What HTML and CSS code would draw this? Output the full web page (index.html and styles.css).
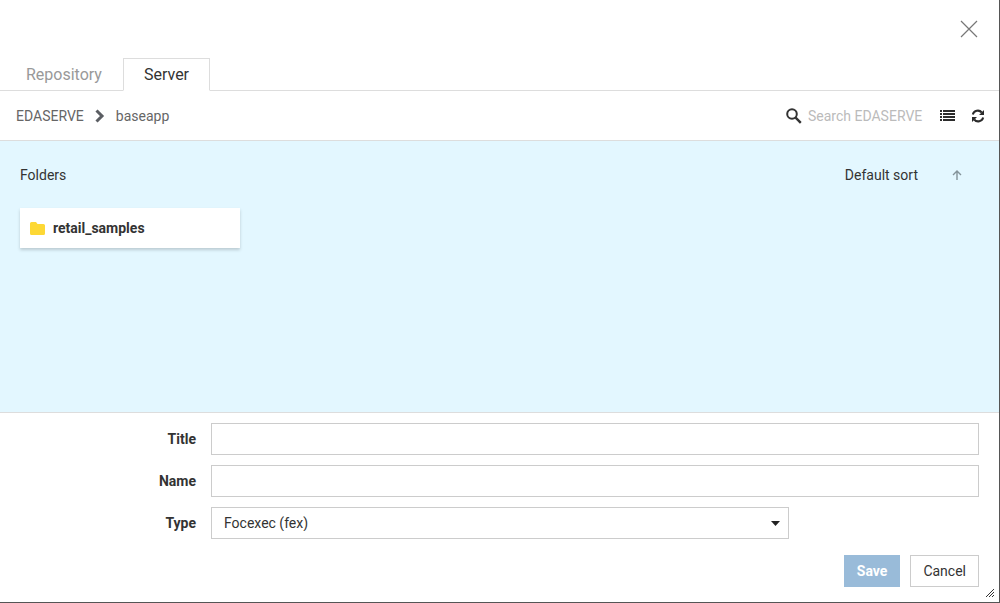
FILE: index.html
```html
<!DOCTYPE html>
<html lang="en">
<head>
    <meta charset="UTF-8">
    <meta name="viewport" content="width=device-width, initial-scale=1.0">
    <title>Save As</title>
    <link rel="stylesheet" href="styles.css">
</head>
<body>
    <div class="dialog">
        <div class="dialog-header">
            <button type="button" class="close-btn" aria-label="Close">
                <svg width="18" height="18" viewBox="0 0 18 18"><path d="M1 1l16 16M17 1L1 17" fill="none" stroke="#777" stroke-width="1.2"/></svg>
            </button>
        </div>

        <div class="tabs" role="tablist">
            <button type="button" class="tab" role="tab" aria-selected="false">Repository</button>
            <button type="button" class="tab active" role="tab" aria-selected="true">Server</button>
        </div>

        <div class="toolbar">
            <nav class="breadcrumb">
                <a href="#">EDASERVE</a>
                <svg width="10" height="14" viewBox="0 0 10 14"><path d="M1.500 1.500L7 7l-5.500 5.500" fill="none" stroke="#5b5e63" stroke-width="3"/></svg>
                <a href="#">baseapp</a>
            </nav>
            <div class="tools">
                <label class="search-icon" for="search" aria-label="Search">
                    <svg width="16" height="16" viewBox="0 0 16 16"><circle cx="6" cy="6" r="4.800" fill="none" stroke="#333" stroke-width="2"/><path d="M9.600 9.600l5.200 5.200" stroke="#333" stroke-width="2.400"/></svg>
                </label>
                <input type="text" id="search" class="search" placeholder="Search EDASERVE">
                <button type="button" class="icon-btn" aria-label="List view">
                    <svg width="15" height="12" viewBox="0 0 15 12"><path d="M0 0h2v2H0zM3 0h12v2H3zM0 3h2v2H0zM3 3h12v2H3zM0 6h2v2H0zM3 6h12v2H3zM0 9h2v2H0zM3 9h12v2H3z" fill="#2b2b2b"/></svg>
                </button>
                <button type="button" class="icon-btn" aria-label="Refresh">
                    <svg width="14" height="14" viewBox="0 0 14 14"><path d="M1.800 5.500A5.200 5.200 0 0 1 10.800 3.500M12.200 8.500A5.200 5.200 0 0 1 3.200 10.500" fill="none" stroke="#2b2b2b" stroke-width="2"/><path d="M13 1v5H8zM1 13V8h5z" fill="#2b2b2b"/></svg>
                </button>
            </div>
        </div>

        <div class="content">
            <div class="content-header">
                <span>Folders</span>
                <div class="sort">
                    <span>Default sort</span>
                    <button type="button" class="icon-btn" aria-label="Sort ascending">
                        <svg width="10" height="10" viewBox="0 0 10 10"><path d="M5 10V1M1 5l4-4 4 4" fill="none" stroke="#84939a" stroke-width="1.400"/></svg>
                    </button>
                </div>
            </div>
            <button type="button" class="folder">
                <svg width="15" height="13" viewBox="0 0 15 13"><path d="M1.500 0H6l1.500 2h6Q15 2 15 3.500v8Q15 13 13.500 13h-12Q0 13 0 11.500v-10Q0 0 1.500 0z" fill="#fdd835"/></svg>
                <span>retail_samples</span>
            </button>
        </div>

        <form class="save-form">
            <div class="row">
                <label for="title">Title</label>
                <input type="text" id="title">
            </div>
            <div class="row">
                <label for="name">Name</label>
                <input type="text" id="name">
            </div>
            <div class="row">
                <label for="type">Type</label>
                <div class="select-box">
                    <select id="type">
                        <option>Focexec (fex)</option>
                    </select>
                    <svg class="caret" width="9" height="5" viewBox="0 0 9 5"><path d="M0 0h9L4.500 5z" fill="#222"/></svg>
                </div>
            </div>
            <div class="buttons">
                <button type="button" class="btn save">Save</button>
                <button type="button" class="btn">Cancel</button>
            </div>
        </form>
        <svg class="resize" width="8" height="8" viewBox="0 0 8 8"><path d="M0 8L8 0M3 8l5-5M6 8l2-2" fill="none" stroke="#333" stroke-width="1"/></svg>
    </div>
</body>
</html>
```

FILE: styles.css
```css
* {
    box-sizing: border-box;
}
body {
    margin: 0;
    font-family: Roboto, Arial, sans-serif;
    font-size: 14px;
    color: #333;
}
button, input, select {
    font-family: inherit;
    font-size: 14px;
    color: inherit;
}
button {
    cursor: pointer;
}
svg {
    display: block;
}
.dialog {
    position: relative;
    display: flex;
    flex-direction: column;
    min-height: 100vh;
    background-color: #fff;
    border-right: 1px solid #555;
    border-bottom: 1px solid #555;
}
.dialog-header {
    display: flex;
    justify-content: flex-end;
    padding: 20px 21px;
}
.close-btn, .icon-btn {
    padding: 0;
    border: none;
    background: none;
}
.tabs {
    display: flex;
    height: 33px;
    padding-left: 5px;
    border-bottom: 1px solid #ddd;
}
.tab {
    height: 33px;
    padding: 0 20px;
    border: 1px solid transparent;
    background: none;
    font-size: 16px;
    color: #999;
}
.tab.active {
    border-color: #ddd;
    border-bottom-color: #fff;
    background-color: #fff;
    color: #333;
}
.toolbar {
    display: flex;
    align-items: center;
    justify-content: space-between;
    height: 50px;
    padding: 0 14px 0 16px;
    border-bottom: 1px solid #ddd;
}
.breadcrumb {
    display: flex;
    align-items: center;
    gap: 11px;
}
.breadcrumb a {
    color: #666;
    text-decoration: none;
}
.tools {
    display: flex;
    align-items: center;
}
.search {
    width: 117px;
    margin: 0 15px 0 6px;
    padding: 0;
    border: none;
    outline: none;
}
.search::placeholder {
    color: #bbb;
}
.tools .icon-btn + .icon-btn {
    margin-left: 16px;
}
.content {
    flex: 1;
    padding: 24px 20px;
    background-color: #e3f7ff;
    border-bottom: 1px solid #ddd;
}
.content-header {
    display: flex;
    align-items: center;
    justify-content: space-between;
    height: 20px;
    margin-bottom: 23px;
    padding-right: 17px;
}
.sort {
    display: flex;
    align-items: center;
    gap: 34px;
}
.folder {
    display: flex;
    align-items: center;
    gap: 8px;
    width: 220px;
    height: 40px;
    padding: 0 10px;
    border: none;
    background-color: #fff;
    box-shadow: 0 2px 3px rgba(0, 0, 0, 0.18);
    font-weight: bold;
}
.save-form {
    padding: 10px 20px 15px 0;
}
.row {
    display: flex;
    align-items: center;
    gap: 15px;
    margin-bottom: 10px;
}
.row label {
    width: 196px;
    text-align: right;
    font-weight: bold;
}
.row input, .row select {
    height: 32px;
    padding: 0 12px;
    border: 1px solid #ccc;
    border-radius: 0;
    background-color: #fff;
}
.row input {
    flex: 1;
}
.select-box {
    position: relative;
    flex: 1;
    margin-right: 190px;
}
.select-box select {
    display: block;
    width: 100%;
    appearance: none;
}
.caret {
    position: absolute;
    top: 14px;
    right: 9px;
    pointer-events: none;
}
.buttons {
    display: flex;
    justify-content: flex-end;
    gap: 10px;
    margin-top: 16px;
}
.btn {
    height: 32px;
    padding: 0 12px;
    border: 1px solid #ccc;
    background-color: #fff;
}
.btn.save {
    border-color: #99bbd9;
    background-color: #99bbd9;
    color: #fff;
    font-weight: bold;
}
.resize {
    position: absolute;
    right: 5px;
    bottom: 5px;
}
```
